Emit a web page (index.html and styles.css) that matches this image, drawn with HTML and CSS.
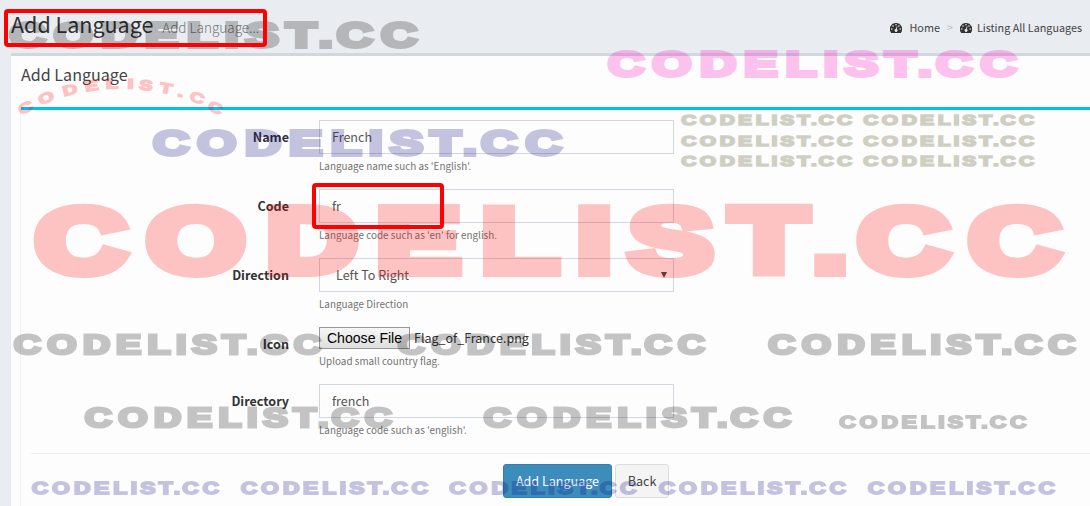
FILE: index.html
```html
<!DOCTYPE html>
<html lang="en">
<head>
<meta charset="utf-8">
<title>Add Language</title>
<link rel="stylesheet" href="styles.css">
</head>
<body>
<header class="page-header">
  <h1 class="page-title">Add Language <small>Add Language...</small></h1>
  <nav class="crumbs">
    <svg class="gauge" viewBox="0 0 12 10"><path fill-rule="evenodd" d="M6 0a6 6 0 0 0-5.1 9.5q.2.5.8.5h8.6q.6 0 .8-.5A6 6 0 0 0 6 0zM6 1a.8.8 0 1 1 0 1.6A.8.8 0 0 1 6 1zM3 2.2a.8.8 0 1 1 0 1.6.8.8 0 0 1 0-1.6zM1.8 5.2a.8.8 0 1 1 0 1.6.8.8 0 0 1 0-1.6zM10.2 5.2a.8.8 0 1 1 0 1.6.8.8 0 0 1 0-1.6zM9 2.2a.8.8 0 1 1 0 1.6A.8.8 0 0 1 9 2.2zM6.8 3.2l.7.2-.7 2.8a1.4 1.4 0 1 1-.8-.2z"/></svg>
    <a class="crumb-home">Home</a><span class="sep">&gt;</span>
    <svg class="gauge" viewBox="0 0 12 10"><path fill-rule="evenodd" d="M6 0a6 6 0 0 0-5.1 9.5q.2.5.8.5h8.6q.6 0 .8-.5A6 6 0 0 0 6 0zM6 1a.8.8 0 1 1 0 1.6A.8.8 0 0 1 6 1zM3 2.2a.8.8 0 1 1 0 1.6.8.8 0 0 1 0-1.6zM1.8 5.2a.8.8 0 1 1 0 1.6.8.8 0 0 1 0-1.6zM10.2 5.2a.8.8 0 1 1 0 1.6.8.8 0 0 1 0-1.6zM9 2.2a.8.8 0 1 1 0 1.6A.8.8 0 0 1 9 2.2zM6.8 3.2l.7.2-.7 2.8a1.4 1.4 0 1 1-.8-.2z"/></svg>
    <a class="crumb-list">Listing All Languages</a>
  </nav>
</header>
<main class="box">
  <h2 class="box-title">Add Language</h2>
  <form class="panel">
    <div class="row"><label class="label">Name</label><div class="field"><div class="control">French</div><p class="help">Language name such as 'English'.</p></div></div>
    <div class="row"><label class="label">Code</label><div class="field"><div class="control">fr</div><p class="help">Language code such as 'en' for english.</p></div></div>
    <div class="row"><label class="label">Direction</label><div class="field"><div class="control select"><span>Left To Right</span><svg class="arrow" viewBox="0 0 6 6"><path d="M0 0h6L3 6z"/></svg></div><p class="help">Language Direction</p></div></div>
    <div class="row row-file"><label class="label">Icon</label><div class="field"><div class="file"><span class="choose">Choose File</span><span class="filename">Flag_of_France.png</span></div><p class="help">Upload small country flag.</p></div></div>
    <div class="row"><label class="label">Directory</label><div class="field"><div class="control">french</div><p class="help">Language code such as 'english'.</p></div></div>
    <div class="actions"><span class="btn primary">Add Language</span><span class="btn">Back</span></div>
  </form>
</main>
<svg class="overlay" width="1090" height="506" viewBox="0 0 1090 506">
  <defs>
    <g id="mark"><text class="mark-text" transform="scale(1.38 1)" y="67.7" x=".7 81.5 168 247.8 323.9 392.8 430.8 504.3 563.8 596.7 677.2">CODELIST.CC</text></g>
  </defs>
  <g class="wm grey">
    <use href="#mark" transform="translate(9 20) scale(.398 .392)"/>
    <use href="#mark" transform="translate(13.5 334.3) scale(.3 .296)"/>
    <use href="#mark" transform="translate(397.5 334.3) scale(.3 .296)"/>
    <use href="#mark" transform="translate(768 334.3) scale(.3 .296)"/>
    <use href="#mark" transform="translate(84.5 407) scale(.3 .296)"/>
    <use href="#mark" transform="translate(483.5 407) scale(.3 .296)"/>
    <use href="#mark" transform="translate(839 415) scale(.183 .186)"/>
  </g>
  <g class="wm pink"><use href="#mark" transform="translate(607.5 49) scale(.399 .392)"/></g>
  <g class="wm olive">
    <use href="#mark" transform="translate(681 114.3) scale(.167 .161)"/>
    <use href="#mark" transform="translate(863 114.3) scale(.167 .161)"/>
    <use href="#mark" transform="translate(681 134.6) scale(.167 .161)"/>
    <use href="#mark" transform="translate(863 134.6) scale(.167 .161)"/>
    <use href="#mark" transform="translate(681 154.9) scale(.167 .161)"/>
    <use href="#mark" transform="translate(863 154.9) scale(.167 .161)"/>
  </g>
  <g class="wm navy">
    <use href="#mark" transform="translate(152.5 128) scale(.399 .392)"/>
    <use href="#mark" transform="translate(31.5 481) scale(.183 .186)"/>
    <use href="#mark" transform="translate(240.5 481) scale(.183 .186)"/>
    <use href="#mark" transform="translate(449 481) scale(.183 .186)"/>
    <use href="#mark" transform="translate(658.5 481) scale(.183 .186)"/>
    <use href="#mark" transform="translate(867.5 481) scale(.183 .186)"/>
  </g>
  <g class="wm red">
    <use href="#mark" transform="translate(34.6 204)"/>
    <g class="arc">
      <text transform="translate(25.5 107.5) rotate(-24) scale(1.45 1)" y="5">C</text>
      <text transform="translate(46 97.7) rotate(-20) scale(1.45 1)" y="5">O</text>
      <text transform="translate(70 89.5) rotate(-14) scale(1.45 1)" y="5">D</text>
      <text transform="translate(91.5 85.5) rotate(-8) scale(1.45 1)" y="5">E</text>
      <text transform="translate(112 83.5) rotate(-3) scale(1.45 1)" y="5">L</text>
      <text transform="translate(130.5 83.5) rotate(1) scale(1.6 1)" y="5">I</text>
      <text transform="translate(146 85) rotate(5) scale(1.45 1)" y="5">S</text>
      <text transform="translate(166 88) rotate(11) scale(1.45 1)" y="5">T</text>
      <text transform="translate(181 92) rotate(15) scale(1.45 1)" y="5">.</text>
      <text transform="translate(197 97.5) rotate(20) scale(1.45 1)" y="5">C</text>
      <text transform="translate(215.5 107.5) rotate(25) scale(1.45 1)" y="5">C</text>
    </g>
  </g>
  <rect class="callout" x="6" y="11" width="259" height="34" rx="2"/>
  <rect class="callout" x="314" y="185" width="128" height="42" rx="2"/>
</svg>
</body>
</html>
```
FILE: styles.css
```css
* { box-sizing: border-box; }
body {
  margin: 0;
  height: 506px;
  overflow: hidden;
  position: relative;
  display: flex;
  flex-direction: column;
  background: #e9ecf1;
  color: #333;
  font: 12.55px/20px "Noto Sans CJK SC", "Open Sans", sans-serif;
  white-space: nowrap;
}
h1, h2, p { margin: 0; font-weight: 400; }
.page-header {
  height: 53px;
  flex: none;
  display: flex;
  justify-content: space-between;
  padding: 11px 8px 0 11px;
}
.page-title { font-size: 21.5px; line-height: 26px; }
.page-title small { font-size: 13.5px; font-weight: 300; color: #777; margin-left: 4px; }
.crumbs { display: flex; align-items: center; height: 32px; font-size: 10.8px; color: #444; }
.gauge { width: 12px; height: 10px; margin-top: 1px; fill: #333; }
.crumb-home { margin-left: 8px; }
.sep { color: #bbb; margin: 0 7px; }
.crumb-list { margin-left: 5px; }
.box {
  flex: 1;
  margin-left: 11px;
  padding-left: 9px;
  border-top: 3px solid #d2d6de;
  background: #fdfdfd;
  box-shadow: 0 1px 1px rgba(0, 0, 0, .1);
}
.box-title {
  height: 54px;
  padding: 7px 0 0;
  margin-left: 1px;
  border-bottom: 3px solid #00c0ef;
  font-size: 16.1px;
  line-height: 22px;
  color: #444;
}
.panel { height: 396px; padding: 10px 0 0 10px; border-left: 1px solid #f3f3f3; }
.row { height: 69px; display: flex; }
.row-file { height: 57px; }
.label { width: 258px; padding-top: 7px; text-align: right; font-weight: 700; }
.field { width: 355px; margin-left: 30px; }
.control {
  height: 34px;
  padding: 0 12px;
  border: 1px solid #d2d6de;
  line-height: 32px;
  color: #555;
}
.select { display: flex; align-items: center; justify-content: space-between; padding: 0 6px 0 16px; }
.arrow { width: 6px; height: 6px; fill: #444; }
.help { margin-top: 4px; font-size: 9.9px; line-height: 16px; color: #737373; }
.file { display: flex; height: 22px; line-height: 22px; }
.choose {
  width: 91px;
  border: 1px solid #999;
  background: linear-gradient(#f6f6f6, #dedede);
  color: #000;
  text-align: center;
  font: 14.1px/20px "Liberation Sans", Arial, sans-serif;
}
.filename { margin-left: 4px; font-size: 12.5px; }
.actions {
  height: 50px;
  padding: 10px 0 0 472px;
  border-top: 1px solid #eee;
  display: flex;
  gap: 3px;
}
.btn {
  width: 54px;
  height: 34px;
  border: 1px solid #ddd;
  border-radius: 3px;
  background: #f4f4f4;
  color: #444;
  text-align: center;
  line-height: 32px;
}
.primary { width: 109px; background: #3c8dbc; border-color: #367fa9; color: #fff; }
.overlay { position: absolute; left: 0; top: 0; pointer-events: none; }
.wm { font-family: "Liberation Sans", Arial, sans-serif; font-weight: 700; opacity: .23; }
.mark-text { font-size: 91px; stroke-width: 10.1px; }
.arc { font-size: 14px; stroke-width: 1.5px; text-anchor: middle; }
.grey { fill: #000; stroke: #000; }
.pink { fill: #ff00be; stroke: #ff00be; }
.olive { fill: #3c3c00; stroke: #3c3c00; }
.navy { fill: #000080; stroke: #000080; }
.red { fill: #f00; stroke: #f00; }
.callout { fill: none; stroke: #f00; stroke-width: 4px; }
```
